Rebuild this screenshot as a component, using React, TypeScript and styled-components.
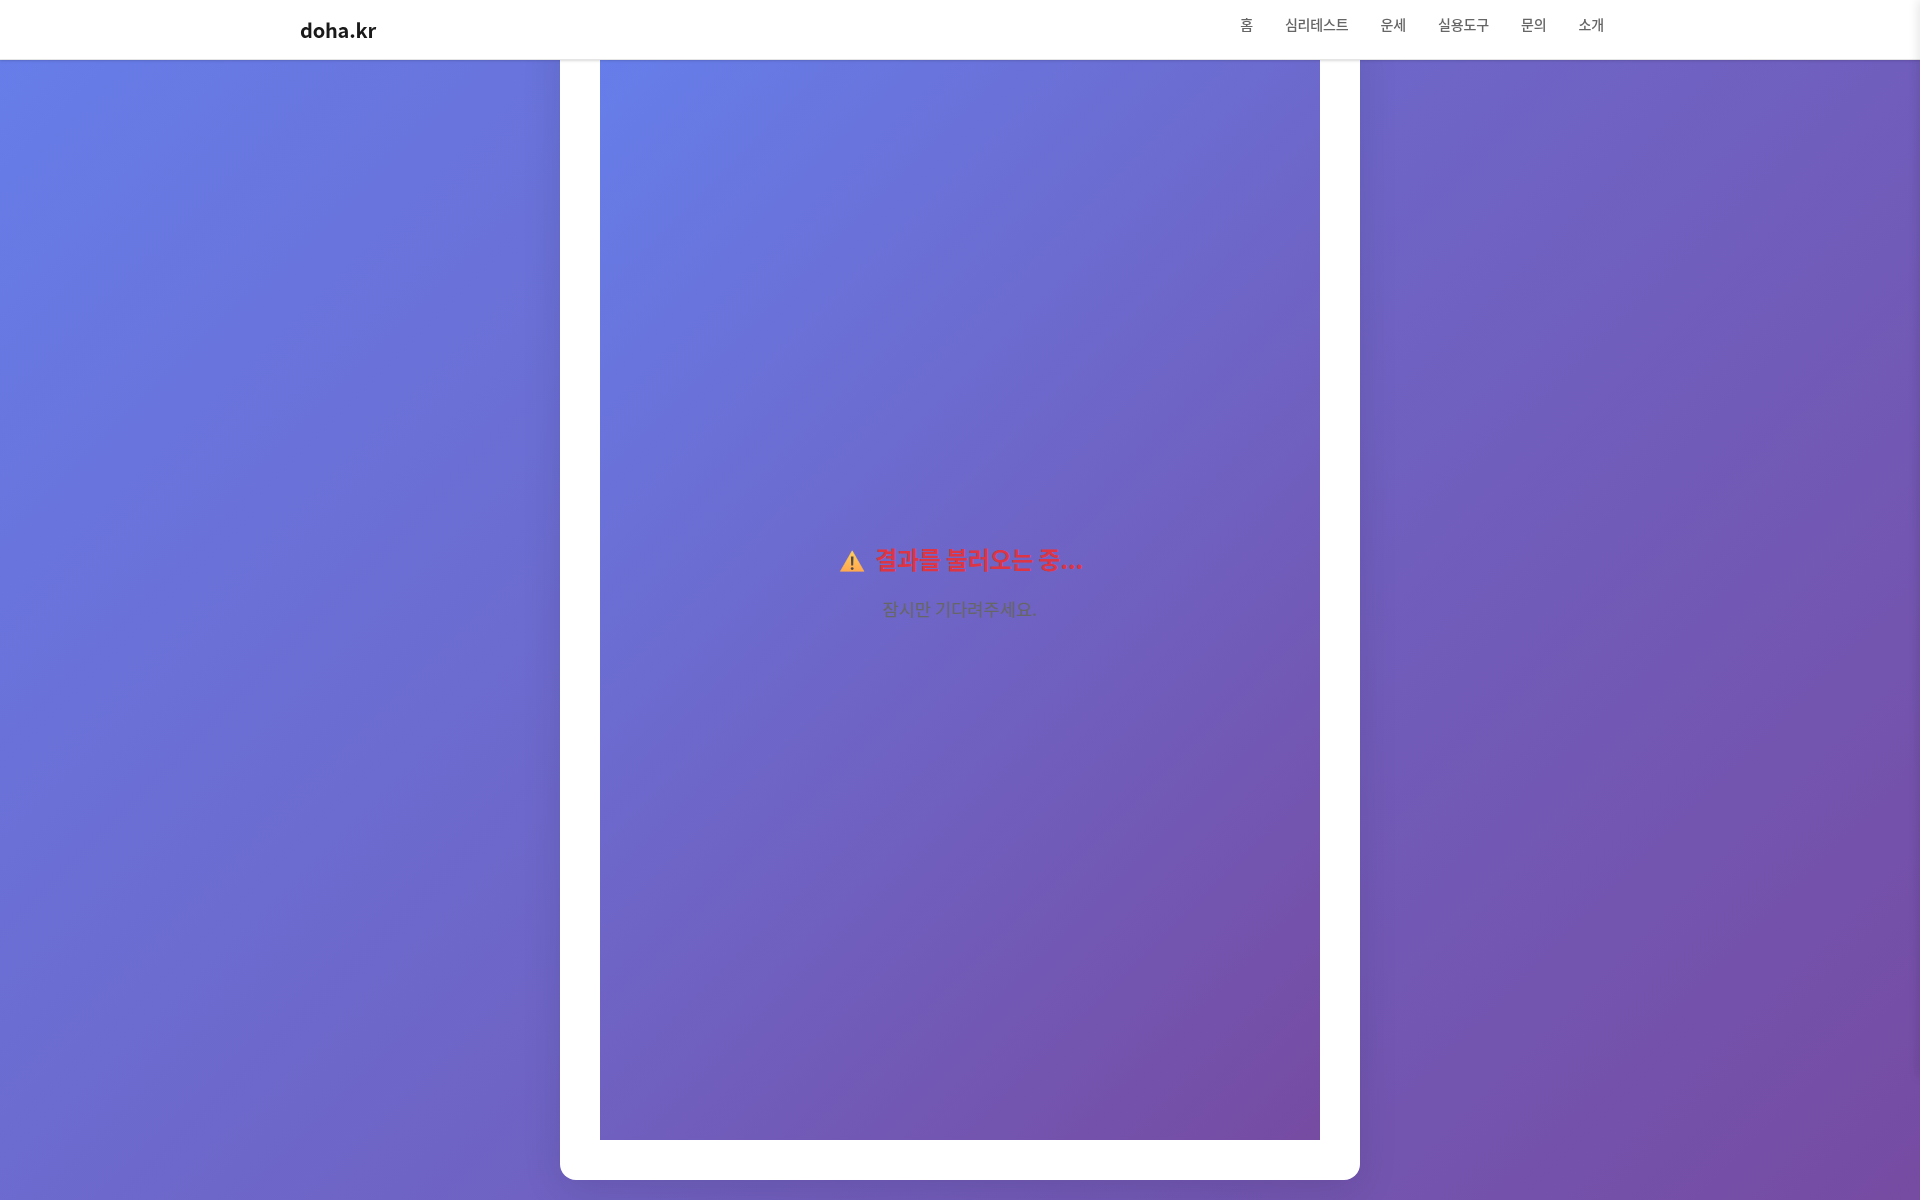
import React from "react";
import styled, { createGlobalStyle } from "styled-components";

const Global = createGlobalStyle`
  *, *::before, *::after { box-sizing: border-box; margin: 0; padding: 0; }
  html, body { overflow: hidden; }
  body {
    font-family: "Noto Sans CJK KR", "Noto Sans", sans-serif;
    color: #1a1a1a;
    background: #fff;
    line-height: 1.6;
  }
`;

const Header = styled.header`
  position: fixed;
  top: 0;
  left: 0;
  right: 0;
  z-index: 10;
  height: 60px;
  background: #fff;
  border-bottom: 1px solid #e5e5e5;
  box-shadow: 0 1px 3px rgba(0, 0, 0, 0.1), 0 1px 2px rgba(0, 0, 0, 0.06);
`;

const Bar = styled.div`
  display: flex;
  align-items: center;
  justify-content: space-between;
  width: 1320px;
  height: 59px;
  margin: 0 auto;
`;

const Brand = styled.a`
  font-size: 20px;
  letter-spacing: -0.01em;
  font-weight: 700;
  color: #1a1a1a;
`;

const Nav = styled.nav`
  display: flex;
  gap: 32px;
  padding: 0 16px 10px 0;
`;

const NavLink = styled.a`
  font-size: 14px;
  letter-spacing: -0.01em;
  font-weight: 500;
  color: #666;
  white-space: nowrap;
`;

const Page = styled.main`
  display: flex;
  justify-content: center;
  height: 1200px;
  padding: 20px;
  background: linear-gradient(135deg, #667eea 0%, #764ba2 100%);
`;

const Card = styled.section`
  display: flex;
  width: 800px;
  padding: 40px;
  border-radius: 16px;
  background: #fff;
  box-shadow: 0 10px 40px rgba(0, 0, 0, 0.1);
`;

const Panel = styled.div`
  flex: 1;
  display: flex;
  flex-direction: column;
  align-items: center;
  padding-top: 480px;
  background: linear-gradient(135deg, #667eea 0%, #764ba2 100%);
`;

const Title = styled.h2`
  display: flex;
  align-items: center;
  gap: 10.5px;
  padding-left: 2px;
  font-size: 24px;
  letter-spacing: -0.01em;
  line-height: 38px;
  font-weight: 700;
  color: #dc3545;
`;

const Message = styled.p`
  margin-top: 16px;
  font-size: 17.6px;
  line-height: 29px;
  color: #666;
`;

const Drawer = styled.aside`
  position: fixed;
  top: 0;
  right: -300px;
  z-index: 20;
  width: 300px;
  height: 1077px;
  background: #fff;
  box-shadow: -2px 0 10px rgba(0, 0, 0, 0.1);
`;

const Warning = styled.svg`
  margin-top: 4px;
`;

const WarningIcon = () => (
  <Warning width="26" height="26" viewBox="0 0 26 26" aria-hidden="true">
    <defs>
      <linearGradient id="warn" x1="0" y1="0" x2="0" y2="1">
        <stop offset="0" stopColor="#ffcf5c" />
        <stop offset="1" stopColor="#ffa94f" />
      </linearGradient>
    </defs>
    <path
      d="M13.2 2.8 L25 23.3 H1.4 Z"
      fill="url(#warn)"
      stroke="url(#warn)"
      strokeWidth="0.6"
      strokeLinejoin="round"
    />
    <path d="M11.9 8.6 h2.6 l-.3 9 h-2 z" fill="#504a4a" />
    <circle cx="13.2" cy="20.6" r="1.4" fill="#504a4a" />
  </Warning>
);

const links = ["홈", "심리테스트", "운세", "실용도구", "문의", "소개"];

export default function App() {
  return (
    <>
      <Global />
      <Header>
        <Bar>
          <Brand>doha.kr</Brand>
          <Nav>
            {links.map((label) => (
              <NavLink key={label}>{label}</NavLink>
            ))}
          </Nav>
        </Bar>
      </Header>
      <Page>
        <Card>
          <Panel>
            <Title>
              <WarningIcon />
              <span>결과를 불러오는 중...</span>
            </Title>
            <Message>잠시만 기다려주세요.</Message>
          </Panel>
        </Card>
      </Page>
      <Drawer />
    </>
  );
}
